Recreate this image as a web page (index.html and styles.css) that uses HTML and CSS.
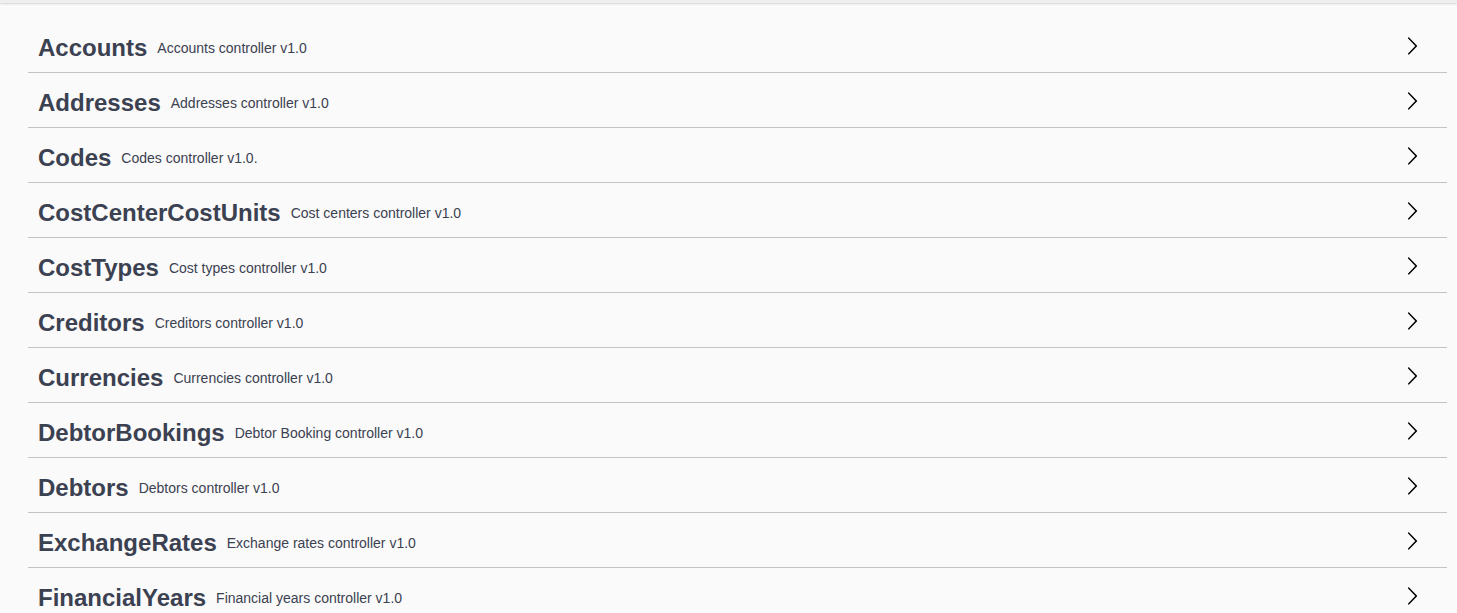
FILE: index.html
```html
<!DOCTYPE html>
<html lang="en">
<head>
    <meta charset="UTF-8">
    <meta name="viewport" content="width=device-width, initial-scale=1.0">
    <title>API</title>
    <link rel="stylesheet" href="styles.css">
</head>
<body>
    <div class="topbar"></div>

    <div class="wrapper">
        <h3 class="tag"><span class="tag-name">Accounts</span><small class="tag-desc">Accounts controller v1.0</small><svg class="arrow" viewBox="0 0 20 20"><path d="M13.25 10L6.109 2.58a.697.697 0 010-.979.68.68 0 01.969 0l7.83 7.908a.697.697 0 010 .979l-7.83 7.909c-.268.268-.701.268-.969 0a.697.697 0 010-.979L13.25 10z"/></svg></h3>
        <h3 class="tag"><span class="tag-name">Addresses</span><small class="tag-desc">Addresses controller v1.0</small><svg class="arrow" viewBox="0 0 20 20"><path d="M13.25 10L6.109 2.58a.697.697 0 010-.979.68.68 0 01.969 0l7.83 7.908a.697.697 0 010 .979l-7.83 7.909c-.268.268-.701.268-.969 0a.697.697 0 010-.979L13.25 10z"/></svg></h3>
        <h3 class="tag"><span class="tag-name">Codes</span><small class="tag-desc">Codes controller v1.0.</small><svg class="arrow" viewBox="0 0 20 20"><path d="M13.25 10L6.109 2.58a.697.697 0 010-.979.68.68 0 01.969 0l7.83 7.908a.697.697 0 010 .979l-7.83 7.909c-.268.268-.701.268-.969 0a.697.697 0 010-.979L13.25 10z"/></svg></h3>
        <h3 class="tag"><span class="tag-name">CostCenterCostUnits</span><small class="tag-desc">Cost centers controller v1.0</small><svg class="arrow" viewBox="0 0 20 20"><path d="M13.25 10L6.109 2.58a.697.697 0 010-.979.68.68 0 01.969 0l7.83 7.908a.697.697 0 010 .979l-7.83 7.909c-.268.268-.701.268-.969 0a.697.697 0 010-.979L13.25 10z"/></svg></h3>
        <h3 class="tag"><span class="tag-name">CostTypes</span><small class="tag-desc">Cost types controller v1.0</small><svg class="arrow" viewBox="0 0 20 20"><path d="M13.25 10L6.109 2.58a.697.697 0 010-.979.68.68 0 01.969 0l7.83 7.908a.697.697 0 010 .979l-7.83 7.909c-.268.268-.701.268-.969 0a.697.697 0 010-.979L13.25 10z"/></svg></h3>
        <h3 class="tag"><span class="tag-name">Creditors</span><small class="tag-desc">Creditors controller v1.0</small><svg class="arrow" viewBox="0 0 20 20"><path d="M13.25 10L6.109 2.58a.697.697 0 010-.979.68.68 0 01.969 0l7.83 7.908a.697.697 0 010 .979l-7.83 7.909c-.268.268-.701.268-.969 0a.697.697 0 010-.979L13.25 10z"/></svg></h3>
        <h3 class="tag"><span class="tag-name">Currencies</span><small class="tag-desc">Currencies controller v1.0</small><svg class="arrow" viewBox="0 0 20 20"><path d="M13.25 10L6.109 2.58a.697.697 0 010-.979.68.68 0 01.969 0l7.83 7.908a.697.697 0 010 .979l-7.83 7.909c-.268.268-.701.268-.969 0a.697.697 0 010-.979L13.25 10z"/></svg></h3>
        <h3 class="tag"><span class="tag-name">DebtorBookings</span><small class="tag-desc">Debtor Booking controller v1.0</small><svg class="arrow" viewBox="0 0 20 20"><path d="M13.25 10L6.109 2.58a.697.697 0 010-.979.68.68 0 01.969 0l7.83 7.908a.697.697 0 010 .979l-7.83 7.909c-.268.268-.701.268-.969 0a.697.697 0 010-.979L13.25 10z"/></svg></h3>
        <h3 class="tag"><span class="tag-name">Debtors</span><small class="tag-desc">Debtors controller v1.0</small><svg class="arrow" viewBox="0 0 20 20"><path d="M13.25 10L6.109 2.58a.697.697 0 010-.979.68.68 0 01.969 0l7.83 7.908a.697.697 0 010 .979l-7.83 7.909c-.268.268-.701.268-.969 0a.697.697 0 010-.979L13.25 10z"/></svg></h3>
        <h3 class="tag"><span class="tag-name">ExchangeRates</span><small class="tag-desc">Exchange rates controller v1.0</small><svg class="arrow" viewBox="0 0 20 20"><path d="M13.25 10L6.109 2.58a.697.697 0 010-.979.68.68 0 01.969 0l7.83 7.908a.697.697 0 010 .979l-7.83 7.909c-.268.268-.701.268-.969 0a.697.697 0 010-.979L13.25 10z"/></svg></h3>
        <h3 class="tag"><span class="tag-name">FinancialYears</span><small class="tag-desc">Financial years controller v1.0</small><svg class="arrow" viewBox="0 0 20 20"><path d="M13.25 10L6.109 2.58a.697.697 0 010-.979.68.68 0 01.969 0l7.83 7.908a.697.697 0 010 .979l-7.83 7.909c-.268.268-.701.268-.969 0a.697.697 0 010-.979L13.25 10z"/></svg></h3>
    </div>
</body>
</html>
```

FILE: styles.css
```css
body {
    margin: 0;
    font-family: "Liberation Sans", Arial, sans-serif;
    background-color: #fafafa;
    color: #3b4151;
}
.topbar {
    height: 3px;
    background-color: #eeeeee;
    box-shadow: 0 1px 2px rgba(0, 0, 0, 0.15);
}
.wrapper {
    padding: 20px 10px 0 28px;
}
.tag {
    display: flex;
    align-items: center;
    margin: 0 0 5px;
    padding: 10px 25px 10px 10px;
    border-bottom: 1px solid rgba(59, 65, 81, 0.3);
    font-size: 24px;
    font-weight: bold;
    line-height: 29px;
}
.tag-desc {
    flex: 1;
    padding: 0 10px;
    font-size: 14px;
    font-weight: normal;
    line-height: normal;
}
.arrow {
    width: 20px;
    height: 20px;
    margin-bottom: 3px;
    fill: #000;
}
```
